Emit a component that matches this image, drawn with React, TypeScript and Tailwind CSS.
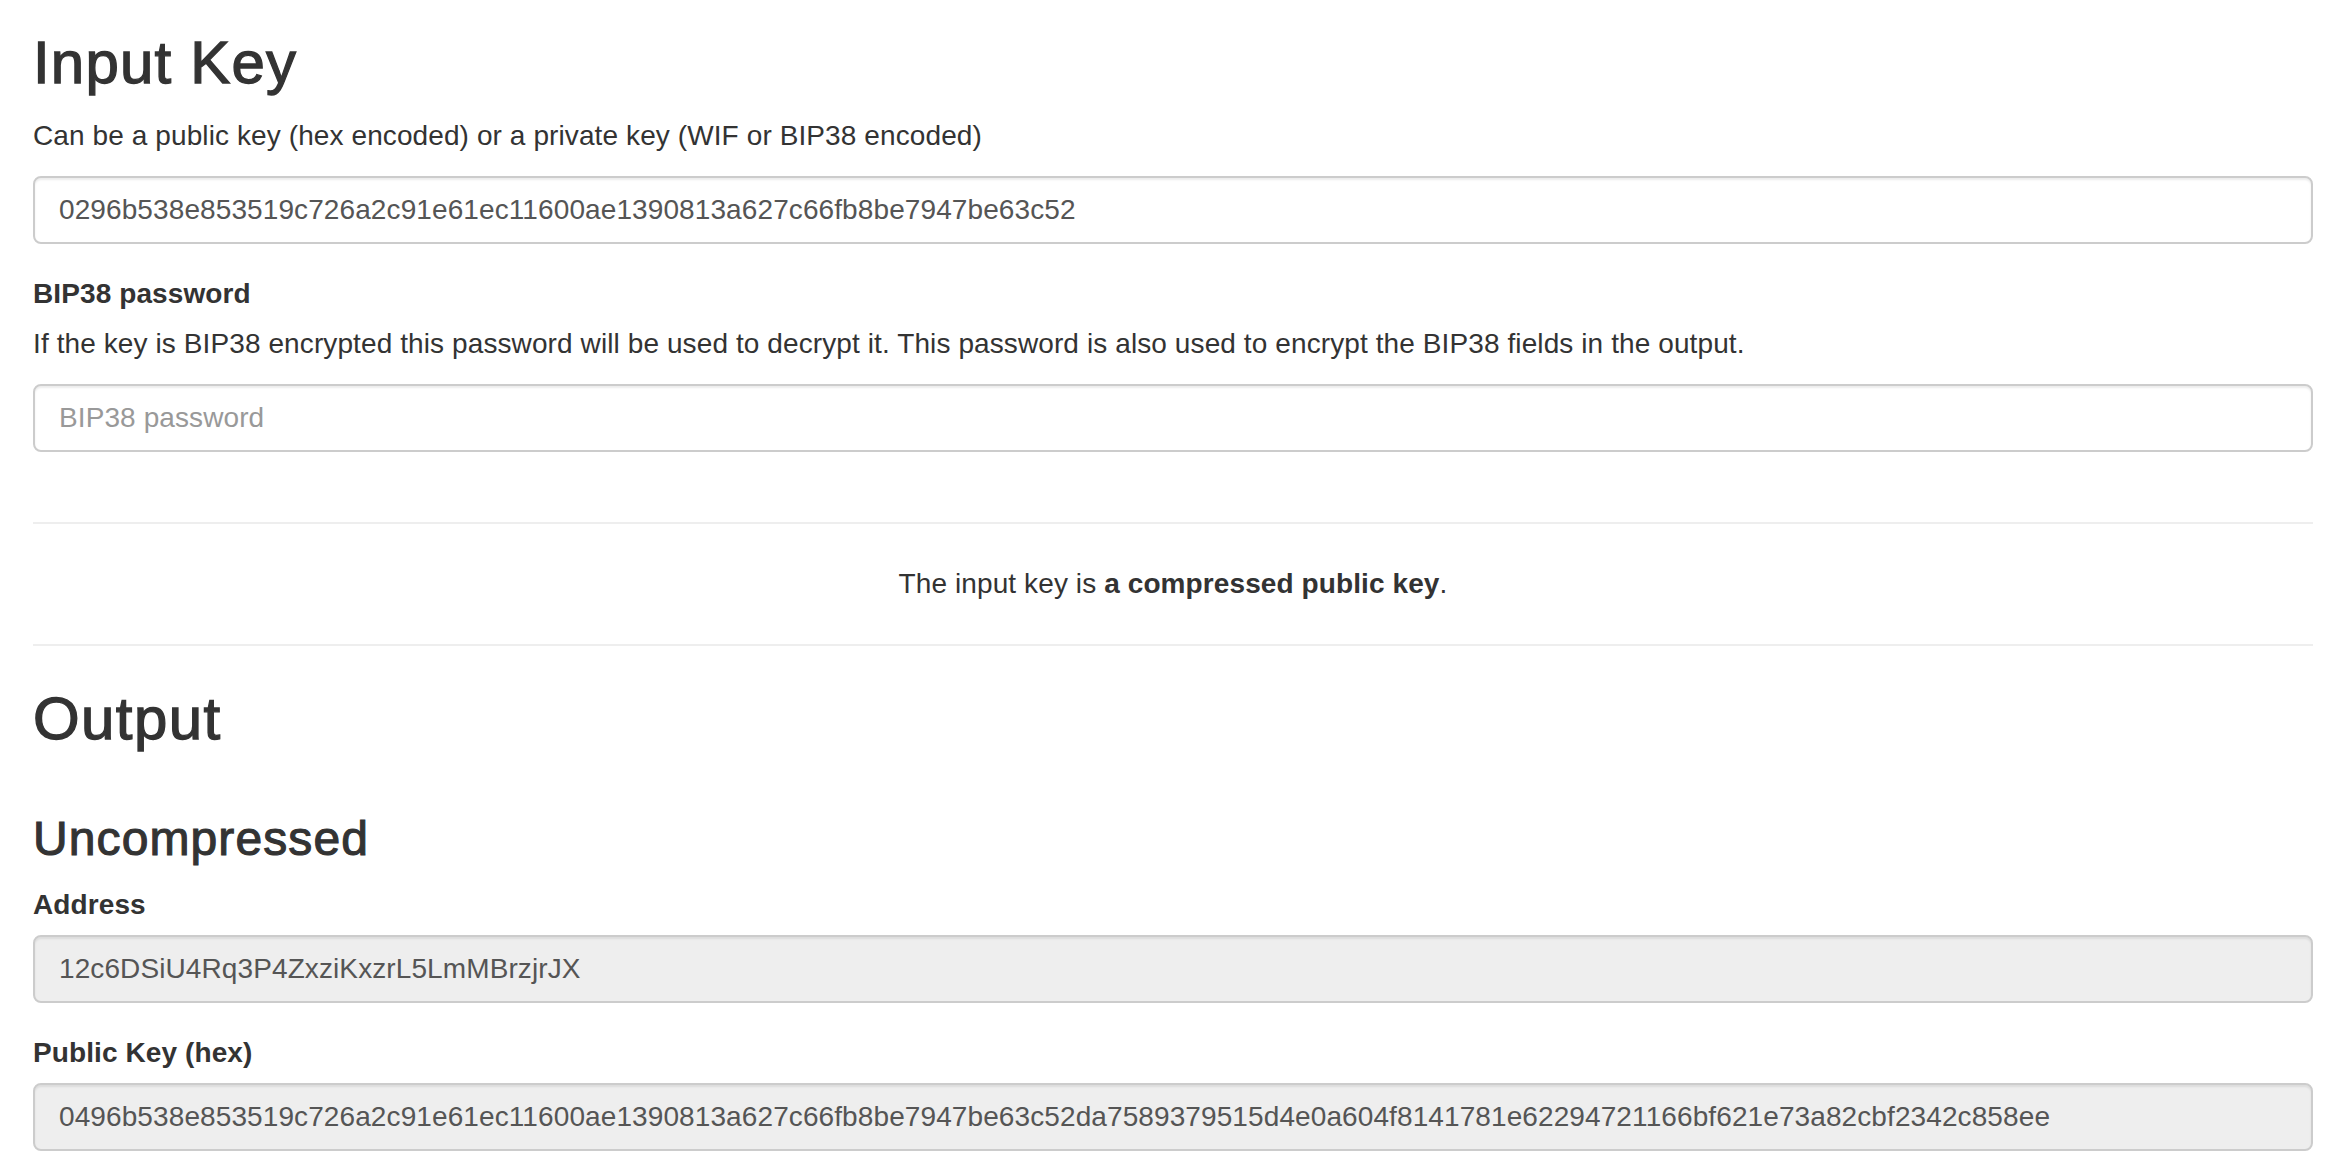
import React from 'react';

interface FieldProps {
  label?: string;
  help?: string;
  value?: string;
  placeholder?: string;
  readOnly?: boolean;
  last?: boolean;
}

const Field: React.FC<FieldProps> = ({ label, help, value, placeholder, readOnly = false, last = false }) => (
  <div className={last ? '' : 'mb-[30px]'}>
    {label && <label className="block h-[40px] mb-[10px] font-bold leading-[40px]">{label}</label>}
    {help && <p className="h-[40px] mb-[20px] leading-[40px]">{help}</p>}
    <input
      type="text"
      readOnly={readOnly}
      defaultValue={value}
      placeholder={placeholder}
      className={`block w-full h-[68px] px-[24px] py-[12px] text-[28px] leading-[40px] tracking-[0.1px] text-[#555] border-2 border-[#ccc] rounded-[8px] shadow-[inset_0_2px_2px_rgba(0,0,0,0.075)] outline-none placeholder:text-[#999] ${
        readOnly ? 'bg-[#eee]' : 'bg-white'
      }`}
      style={{ fontFamily: '"Liberation Sans", Arial, sans-serif' }}
    />
  </div>
);

export default function App() {
  return (
    <div
      className="min-h-screen bg-white text-[#333] text-[28px] leading-[40px] tracking-[0.1px] px-[33px] pt-[30px] pb-[20px] flex flex-col"
      style={{ fontFamily: '"Liberation Sans", Arial, sans-serif' }}
    >
      <h2 className="text-[60px] leading-[66px] font-normal tracking-[1.2px] [-webkit-text-stroke:1.3px_#333] mb-[20px]">
        Input Key
      </h2>
      <p className="h-[40px] mb-[20px]">Can be a public key (hex encoded) or a private key (WIF or BIP38 encoded)</p>
      <Field value="0296b538e853519c726a2c91e61ec11600ae1390813a627c66fb8be7947be63c52" />

      <Field
        label="BIP38 password"
        help="If the key is BIP38 encrypted this password will be used to decrypt it. This password is also used to encrypt the BIP38 fields in the output."
        placeholder="BIP38 password"
        last
      />

      <hr className="mt-[70px] mb-[40px] border-0 border-t-2 border-[#eee]" />
      <p className="h-[40px] text-center">
        The input key is <strong className="font-bold">a compressed public key</strong>.
      </p>
      <hr className="mt-[40px] mb-[40px] border-0 border-t-2 border-[#eee]" />

      <h2 className="text-[60px] leading-[66px] font-normal tracking-[1.4px] [-webkit-text-stroke:1.3px_#333] mb-[60px]">
        Output
      </h2>
      <h3 className="text-[48px] leading-[53px] font-normal tracking-[1.1px] [-webkit-text-stroke:1.1px_#333] mb-[20px]">
        Uncompressed
      </h3>
      <Field label="Address" value="12c6DSiU4Rq3P4ZxziKxzrL5LmMBrzjrJX" readOnly />
      <Field
        label="Public Key (hex)"
        value="0496b538e853519c726a2c91e61ec11600ae1390813a627c66fb8be7947be63c52da7589379515d4e0a604f8141781e62294721166bf621e73a82cbf2342c858ee"
        readOnly
        last
      />
    </div>
  );
}
